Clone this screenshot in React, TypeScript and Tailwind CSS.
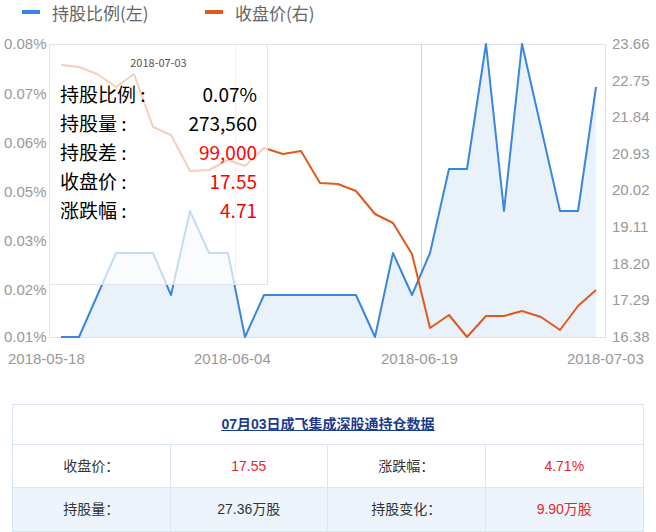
import React from 'react';

const blue: [number, number][] = [[61,337],[79,337],[116,253],[153,253],[171,295],[190,211],[209,253],[228,253],[245,337],[264,295],[356,295],[375,337],[393,253],[412,295],[430,253],[449,169],[467,169],[486,44],[504,211],[522,44],[560,211],[578,211],[596,87]];
const orange: [number, number][] = [[61,65],[79,67],[97,74],[116,87],[134,74],[153,127],[171,135],[190,171],[209,170],[228,160],[245,166],[264,148],[283,154],[301,151],[320,183],[338,184],[356,191],[375,214],[393,223],[412,254],[430,328],[449,315],[467,337],[486,316],[504,316],[522,311],[541,317],[560,330],[578,306],[596,290]];

const pts = (a: [number, number][]) => a.map(p => p.join(',')).join(' ');
const leftLabels = ['0.08%', '0.07%', '0.06%', '0.05%', '0.03%', '0.02%', '0.01%'];
const rightLabels = ['23.66', '22.75', '21.84', '20.93', '20.02', '19.11', '18.20', '17.29', '16.38'];

const Chart = () => (
  <div className="relative h-[380px]">
    <svg width="656" height="380" className="absolute inset-0" style={{ fontFamily: '"Liberation Sans", sans-serif' }}>
      <rect x="22" y="10" width="18" height="4" fill="#3b86dd" />
      <text x="52" y="20" fontSize="17" fill="#666" style={{ fontFamily: '"Noto Sans CJK SC", sans-serif' }}>持股比例(左)</text>
      <rect x="205" y="10" width="18" height="4" fill="#e0591f" />
      <text x="235" y="20" fontSize="17" fill="#666" style={{ fontFamily: '"Noto Sans CJK SC", sans-serif' }}>收盘价(右)</text>
      <rect x="49.5" y="44.5" width="556" height="293" fill="none" stroke="#dde3ee" />
      <line x1="235.5" y1="44" x2="235.5" y2="337" stroke="#ccd3e0" />
      <line x1="421.5" y1="44" x2="421.5" y2="337" stroke="#ccd3e0" />
      <polygon points={`61,337 ${pts(blue)} 596,337`} fill="#e9f1fb" />
      <polyline points={pts(blue)} fill="none" stroke="#3b86dd" strokeWidth="2" strokeLinejoin="round" />
      <polyline points={pts(orange)} fill="none" stroke="#e0591f" strokeWidth="2" strokeLinejoin="round" />
      {leftLabels.map((l, i) => (
        <text key={l} x="4" y={[49, 99, 148, 197, 246, 295, 342][i]} fontSize="15" fill="#999">{l}</text>
      ))}
      {rightLabels.map((l, i) => (
        <text key={l} x="612" y={49 + i * 36.6} fontSize="15" fill="#999">{l}</text>
      ))}
      <text x="8" y="364" fontSize="15" fill="#999">2018-05-18</text>
      <text x="194" y="364" fontSize="15" fill="#999">2018-06-04</text>
      <text x="381" y="364" fontSize="15" fill="#999">2018-06-19</text>
      <text x="567" y="364" fontSize="15" fill="#999">2018-07-03</text>
    </svg>
    <div className="absolute left-[49px] top-[44px] w-[219px] h-[241px] bg-white/70 border border-[#e0e4ec] px-[10px] pt-[10px]" style={{ fontFamily: '"Noto Sans CJK SC", "Liberation Sans", sans-serif' }}>
      <div className="text-center text-[11px] text-[#555] leading-[14px]">2018-07-03</div>
      <div className="mt-[14px] flex flex-col gap-[7px] text-[19px] leading-[22px]">
        {[
          ['持股比例 :', '0.07%', 'text-black'],
          ['持股量 :', '273,560', 'text-black'],
          ['持股差 :', '99,000', 'text-[#ff0000]'],
          ['收盘价 :', '17.55', 'text-[#ff0000]'],
          ['涨跌幅 :', '4.71', 'text-[#ff0000]'],
        ].map(([k, v, c]) => (
          <div key={k} className="flex justify-between">
            <span className="text-black">{k}</span>
            <span className={c}>{v}</span>
          </div>
        ))}
      </div>
    </div>
  </div>
);

export default function App() {
  const cell = 'flex items-center justify-center border-r border-[#dbe5f8] last:border-r-0';
  return (
    <div className="w-[656px] h-[532px] bg-white overflow-hidden" style={{ fontFamily: '"Liberation Sans", "Noto Sans CJK SC", sans-serif' }}>
      <Chart />
      <div className="mx-[12px] mt-[24px] border border-[#dbe5f8] text-[14px]">
        <div className="h-[40px] flex items-center justify-center border-b border-[#dbe5f8]">
          <span className="text-[14px] font-bold text-[#1c3b8c] underline">07月03日成飞集成深股通持仓数据</span>
        </div>
        <div className="grid grid-cols-4 h-[43px] border-b border-[#dbe5f8]">
          <div className={`${cell} text-[#333]`}>收盘价：</div>
          <div className={`${cell} text-[#e4262b]`}>17.55</div>
          <div className={`${cell} text-[#333]`}>涨跌幅：</div>
          <div className={`${cell} text-[#e4262b]`}>4.71%</div>
        </div>
        <div className="grid grid-cols-4 h-[43px] bg-[#eef4fc]">
          <div className={`${cell} text-[#333]`}>持股量：</div>
          <div className={`${cell} text-[#333]`}>27.36万股</div>
          <div className={`${cell} text-[#333]`}>持股变化：</div>
          <div className={`${cell} text-[#e4262b]`}>9.90万股</div>
        </div>
      </div>
    </div>
  );
}
